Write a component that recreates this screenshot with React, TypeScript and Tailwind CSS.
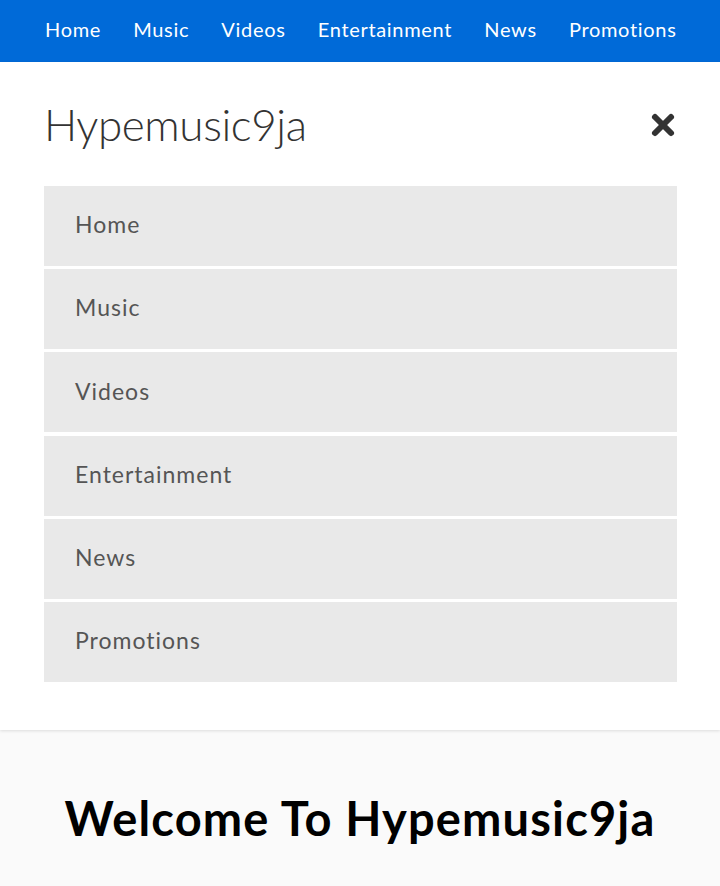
import { X } from 'lucide-react'

const links = ['Home', 'Music', 'Videos', 'Entertainment', 'News', 'Promotions']

export default function App() {
  return (
    <div className="min-h-[886px] bg-[#fafafa] font-['Lato','Noto_Sans',sans-serif]">
      <nav className="flex h-[62px] items-center gap-[32.2px] bg-[#006ad8] px-[45px] pb-[5px] text-[20px] tracking-[0.68px] text-white">
        {links.map((link) => (
          <a key={link} href="#" className="leading-none">
            {link}
          </a>
        ))}
      </nav>

      <div className="bg-white pb-[48px] pl-[44px] pr-[43px] pt-[34px] shadow-[0_1px_3px_rgba(0,0,0,0.12)]">
        <div className="flex items-center justify-between pb-[34px]">
          <h1 className="text-[44px] font-light leading-[56px] tracking-[-0.4px] text-[#333]">
            Hypemusic9ja
          </h1>
          <button type="button" className="mr-[-2px] mt-[2px] text-[#333]">
            <X size={32} strokeWidth={4.5} />
          </button>
        </div>

        <ul className="flex flex-col gap-[3.2px]">
          {links.map((link) => (
            <li
              key={link}
              className="flex h-[80px] items-center bg-[#e9e9e9] pb-[3px] pl-[31px] text-[23px] tracking-[1px] text-[#555]"
            >
              {link}
            </li>
          ))}
        </ul>
      </div>

      <h2 className="pt-[65px] text-center text-[47px] font-bold leading-none tracking-[1.15px] text-black">
        Welcome To Hypemusic9ja
      </h2>
    </div>
  )
}
